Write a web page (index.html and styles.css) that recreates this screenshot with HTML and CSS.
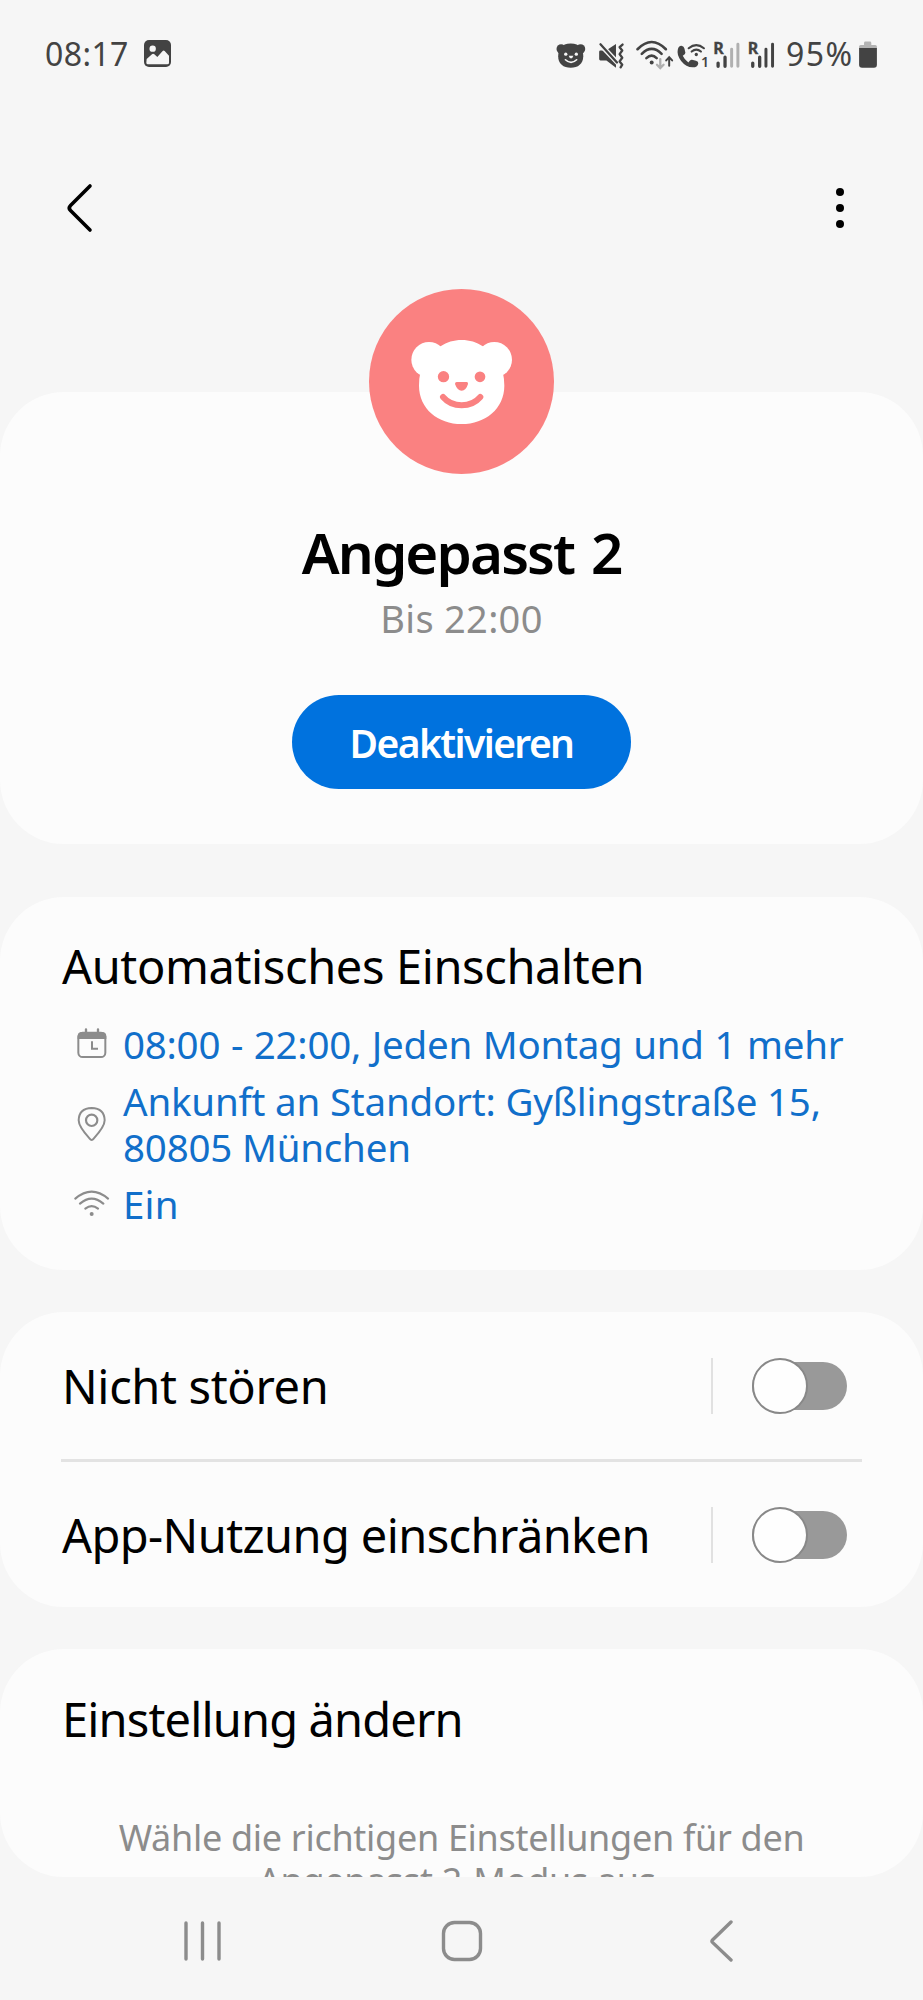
FILE: index.html
```html
<!DOCTYPE html>
<html lang="de">
<head>
<meta charset="utf-8">
<title>Angepasst 2</title>
<link rel="stylesheet" href="styles.css">
</head>
<body>
<svg class="defs" aria-hidden="true">
  <symbol id="signal" viewBox="0 0 96 100">
    <text x="3" y="52" font-size="50" font-weight="700" textLength="32" lengthAdjust="spacingAndGlyphs">R</text>
    <path d="M18 79v10M39 61v28" stroke-width="10" stroke-linecap="round"/>
  </symbol>
</svg>
<div class="status">
  <span class="clock">08:17</span>
  <svg class="picture" viewBox="0 0 81 81"><rect width="81" height="81" rx="15" fill="#434343"/><circle cx="26" cy="26" r="9.5" fill="#f6f6f6"/><path d="M8 57 24 43q3-3 7 0l9 8 16-18q3-3 6 0l13 14v21q0 5-5 5H12q-5 0-5-5Z" fill="#f6f6f6"/></svg>
  <div class="indicators">
    <svg width="40" height="33" viewBox="30 30 120 100"><circle cx="48" cy="66" r="14"/><circle cx="107" cy="66" r="14"/><path d="M77 50c29 0 38 20 38 38 0 23-16 35-38 35S39 111 39 88c0-18 9-38 38-38Z"/><g fill="#f6f6f6"><circle cx="62" cy="82" r="5"/><circle cx="94" cy="82" r="5"/><path d="M71 87h14q-2 8-7 8t-7-8Z"/></g><path d="M61 99q17 16 34 0" fill="none" stroke="#f6f6f6" stroke-width="5" stroke-linecap="round"/></svg>
    <svg width="38" height="33" viewBox="150 30 114 100"><path d="M162 75q0-4 4-4h17l30-20v72l-29-22h-18q-4 0-4-4Z"/><path d="m164 51 54 57" stroke="#f6f6f6" stroke-width="15"/><path d="m166 52 50 55" stroke="#434343" stroke-width="7" stroke-linecap="round"/><path d="m233 53-9 8 8 10-8 11 8 11-8 11 8 10-5 8" fill="none" stroke="#434343" stroke-width="7" stroke-linejoin="round" stroke-linecap="round"/></svg>
    <svg width="42" height="33" viewBox="264 30 126 100"><g fill="none" stroke="#434343" stroke-width="8" stroke-linecap="round"><path d="M277 67q43-44 86 0M290 81q30-30 60 0M304 94q16-15 31 0"/><path d="M373 117V92m-9 9 9-10 9 10" stroke-width="6"/><path d="M346 97v26m-10-9 10 10 10-10" stroke="#b0b0b0" stroke-width="7"/></g><circle cx="320" cy="107" r="6"/></svg>
    <svg width="36" height="33" viewBox="390 30 108 100"><path d="M411 57q5 1 7 8l3 13q0 5-8 9 5 12 17 20 6-10 11-8l12 3q8 2 7 8-2 12-17 12-20 0-35-19-14-19-10-35 3-13 13-11Z"/><g fill="none" stroke="#434343" stroke-width="6.5" stroke-linecap="round"><path d="M431 64q23-19 46 0M440 74q14-12 28 0"/></g><circle cx="454" cy="83" r="5"/><text x="468" y="121" font-size="43" font-weight="600">1</text></svg>
    <svg width="34" height="33" viewBox="498 30 102 100"><use href="#signal" x="501" y="30" width="96" height="100" stroke="#434343"/><path d="M560 67v52M579 52v67" stroke="#b0b0b0" stroke-width="9" stroke-linecap="round"/></svg>
    <svg width="32" height="33" viewBox="600 30 96 100"><use href="#signal" x="605" y="30" width="96" height="100" stroke="#434343"/><path d="M663 67v52M683 52v67" stroke="#434343" stroke-width="9" stroke-linecap="round"/></svg>
    <span class="percent">95%</span>
    <svg width="20" height="33" viewBox="939 30 60 100"><path d="M957 54v-6q0-4 4-4h14q4 0 4 4v6h12q5 0 5 5v6h-54v-6q0-5 5-5Z" fill="#b3b3b3"/><path d="M942 63h54v51q0 9-9 9h-36q-9 0-9-9Z"/></svg>
  </div>
</div>
<header class="header">
  <svg width="30" height="52" viewBox="0 0 30 52"><path d="M26 4 6.500 23.500q-2.500 2.500 0 5L26 48" fill="none" stroke="#000" stroke-width="3.600" stroke-linecap="round"/></svg>
  <svg width="8" height="40" viewBox="0 0 8 40"><circle cx="4" cy="4" r="4"/><circle cx="4" cy="20" r="4"/><circle cx="4" cy="36" r="4"/></svg>
</header>
<main class="content">
  <section class="card profile">
    <svg class="avatar" viewBox="57 57 555 555"><circle cx="334.500" cy="334.500" r="277.500" fill="#fa8181"/><g fill="#fff"><circle cx="237" cy="269" r="53"/><circle cx="433" cy="269" r="53"/><path d="M335 210c24 0 45 7 62 18 42 19 66 62 66 119 0 69-57 115-128 115S207 416 207 347c0-57 24-100 66-119 17-11 38-18 62-18Z"/></g><g fill="#fa8181"><circle cx="280.500" cy="320" r="17"/><circle cx="390" cy="320.500" r="16"/><path d="M320 336h30q5 0 4 6-6 20-19 20t-20-20q0-6 5-6Z"/></g><path d="M279 381c28 33 84 33 112 0" fill="none" stroke="#fa8181" stroke-width="18" stroke-linecap="round"/></svg>
    <h1 class="name">Angepasst 2</h1>
    <p class="until">Bis 22:00</p>
    <button class="button">Deaktivieren</button>
  </section>
  <section class="card auto">
    <h2 class="heading">Automatisches Einschalten</h2>
    <ul class="triggers">
      <li class="trigger"><svg width="36" height="36" viewBox="0 0 108 108"><rect x="13" y="20" width="81" height="73" rx="13" fill="none" stroke="#8c8c8c" stroke-width="6"/><path d="M11 39V31q0-13 13-13h60q13 0 13 13v8Z" fill="#8c8c8c"/><path d="M36 10v12M72 10v12" stroke="#8c8c8c" stroke-width="7" stroke-linecap="round"/><path d="M54 46v22h18" fill="none" stroke="#8c8c8c" stroke-width="6"/></svg><span class="time">08:00 - 22:00, Jeden Montag und 1 mehr</span></li>
      <li class="trigger"><svg width="36" height="36" viewBox="0 0 108 108"><path d="M53 102q-3 0-6-4Q14 62 14 43 15 7 53 6q38 1 39 37 0 19-33 55-3 4-6 4Z" fill="none" stroke="#8c8c8c" stroke-width="6"/><circle cx="53" cy="43" r="17" fill="none" stroke="#8c8c8c" stroke-width="6.500"/></svg><span>Ankunft an Standort: Gyßlingstraße 15,<br>80805 München</span></li>
      <li class="trigger"><svg width="36" height="36" viewBox="0 0 108 108"><path d="M4 38Q53-4 102 38M18 53q35-30 70 0M34 68q19-15 38 0" fill="none" stroke="#8c8c8c" stroke-width="6.500" stroke-linecap="round"/><circle cx="53" cy="84" r="6" fill="#8c8c8c"/></svg><span class="wifi">Ein</span></li>
    </ul>
  </section>
  <section class="card switches">
    <div class="row dnd"><span class="label">Nicht stören</span><span class="bar"></span><span class="toggle"><span class="thumb"></span></span></div>
    <div class="line"></div>
    <div class="row apps"><span class="label">App-Nutzung einschränken</span><span class="bar"></span><span class="toggle"><span class="thumb"></span></span></div>
  </section>
  <section class="card change">
    <h2 class="heading">Einstellung ändern</h2>
    <p class="hint">Wähle die richtigen Einstellungen für den<br>Angepasst 2-Modus aus.</p>
  </section>
</main>
<nav class="nav">
  <svg width="38" height="42" viewBox="0 0 38 42"><path d="M2 3v36M18.500 3v36M35 3v36" stroke="#8c8c8c" stroke-width="3.400" stroke-linecap="round"/></svg>
  <svg width="42" height="42" viewBox="0 0 42 42"><rect x="2.500" y="2.500" width="37" height="37" rx="11" fill="none" stroke="#8c8c8c" stroke-width="3.400"/></svg>
  <svg width="26" height="42" viewBox="0 0 26 42"><path d="M23 2 4.500 20q-1.200 1.200 0 2.400L23 40" fill="none" stroke="#8c8c8c" stroke-width="3.400" stroke-linecap="round"/></svg>
</nav>
</body>
</html>
```

FILE: styles.css
```css
* { box-sizing: border-box; margin: 0; padding: 0; }
body {
  width: 923px;
  height: 2000px;
  display: flex;
  flex-direction: column;
  overflow: hidden;
  background: #f6f6f6;
  color: #000;
  font-family: "Noto Sans", sans-serif;
}
svg { display: block; flex: none; }
.defs { display: none; }
.status {
  height: 106px;
  flex: none;
  display: flex;
  align-items: center;
  padding: 0 45px;
  color: #434343;
  font-size: 32px;
}
.clock { letter-spacing: .4px; }
.picture { width: 27px; height: 27px; margin-left: 15px; }
.indicators { margin-left: auto; display: flex; align-items: center; fill: #434343; }
.percent { width: 81px; padding-left: 9px; letter-spacing: 1.5px; white-space: nowrap; }
.header {
  height: 203px;
  flex: none;
  display: flex;
  align-items: center;
  justify-content: space-between;
  padding: 0 79px 0 64px;
}
.content { height: 1568px; flex: none; display: flex; flex-direction: column; padding-top: 83px; }
.card { background: #fcfcfc; border-radius: 64px; flex: none; }
.profile { height: 452px; display: flex; flex-direction: column; align-items: center; }
.avatar { width: 185px; height: 185px; margin-top: -103px; }
.name { margin-top: 46px; font-size: 56.5px; line-height: 66px; font-weight: 600; letter-spacing: -1.9px; word-spacing: 4px; }
.until { margin-top: 9px; font-size: 38px; line-height: 46px; letter-spacing: .3px; color: #8c8c8c; }
.button {
  margin-top: 54px;
  width: 339px;
  height: 94px;
  border: 0;
  border-radius: 47px;
  background: #0072de;
  color: #fff;
  font: 600 39px "Noto Sans", sans-serif;
  letter-spacing: -1.6px;
}
.auto { height: 373px; margin-top: 53px; padding: 39px 62px 0; }
.heading { font-size: 47px; line-height: 60px; font-weight: 400; letter-spacing: -.38px; }
.triggers { list-style: none; margin-top: 25px; padding-left: 12px; display: flex; flex-direction: column; gap: 11px; }
.trigger {
  display: flex;
  align-items: center;
  gap: 13px;
  font-size: 38.5px;
  line-height: 46px;
  letter-spacing: -.2px;
  color: #116fca;
  white-space: nowrap;
}
.time { letter-spacing: -.25px; word-spacing: 1px; }
.wifi { letter-spacing: .2px; }
.switches { height: 295px; margin-top: 42px; padding: 0 61px; }
.row { height: 147px; display: flex; align-items: center; padding-right: 15px; font-size: 47px; line-height: 60px; }
.dnd { letter-spacing: -.35px; }
.apps { height: 145px; letter-spacing: -.6px; }
.label { flex: 1; white-space: nowrap; padding: 1px 0 0 1px; }
.line { height: 3px; background: #e3e3e3; }
.bar { width: 2px; height: 56px; background: #e1e1e1; margin-right: 39px; }
.toggle { width: 95px; height: 48px; border-radius: 24px; background: #999; display: flex; align-items: center; }
.thumb { width: 56px; height: 56px; flex: none; border: 2px solid #888; border-radius: 50%; background: #fefefe; }
.change { height: 228px; margin-top: 42px; padding: 40px 61px 0; overflow: hidden; }
.change .heading { letter-spacing: -.85px; padding-left: 1px; }
.hint { margin-top: 67px; font-size: 36px; line-height: 43px; letter-spacing: -.3px; text-align: center; color: #8c8c8c; white-space: nowrap; }
.nav { height: 123px; flex: none; display: flex; align-items: center; justify-content: space-between; padding: 5px 189px 0 184px; }
.nav svg:nth-child(2) { margin: 0 3px 0 -3px; }
```
